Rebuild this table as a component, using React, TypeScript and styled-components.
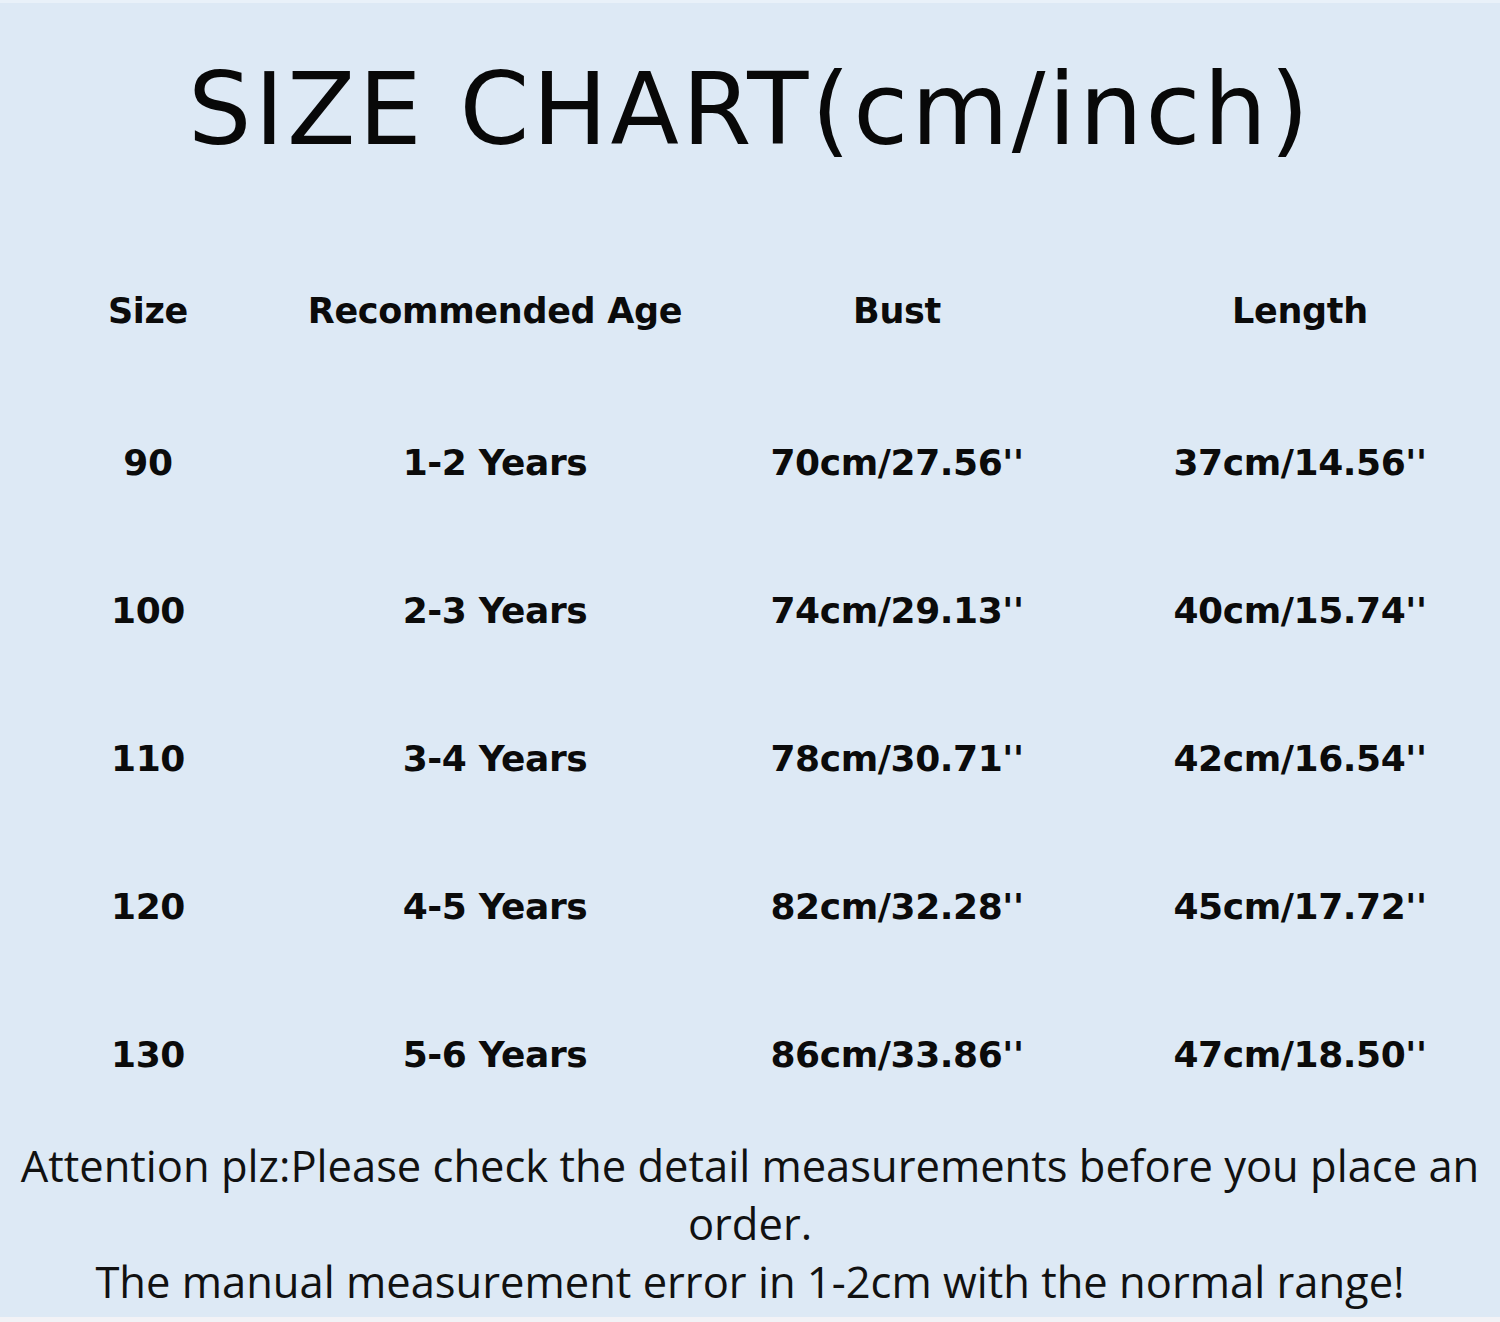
import React from "react";
import styled, { createGlobalStyle } from "styled-components";

const GlobalStyle = createGlobalStyle`
  html, body {
    margin: 0;
    padding: 0;
    background: #dde9f5;
  }
`;

const Page = styled.div`
  width: 1500px;
  height: 1322px;
  box-sizing: border-box;
  background: #dde9f5;
  border-top: 3px solid #e9f1f9;
  border-bottom: 5px solid #f2f2f6;
  display: flex;
  flex-direction: column;
  color: #0a0a0a;
  overflow: hidden;
`;

const Title = styled.h1`
  height: 234px;
  margin: 0;
  padding-top: 52px;
  box-sizing: border-box;
  text-align: center;
  font-family: "DejaVu Sans", sans-serif;
  font-weight: 400;
  font-size: 100px;
  line-height: 110px;
  letter-spacing: 3px;
  color: #080808;
`;

const Table = styled.div`
  display: grid;
  grid-template-columns: 296px 398px 406px 400px;
  grid-template-rows: 151px repeat(5, 148px);
`;

const Cell = styled.div<{ $head?: boolean }>`
  display: flex;
  align-items: center;
  justify-content: center;
  padding-bottom: ${(p) => (p.$head ? "3px" : "0")};
  font-family: "DejaVu Sans", sans-serif;
  font-weight: 700;
  font-size: ${(p) => (p.$head ? "35px" : "36px")};
  letter-spacing: ${(p) => (p.$head ? "-0.3px" : "-0.4px")};
  color: #0b0b0b;
  white-space: nowrap;
`;

const Notes = styled.div`
  padding-top: 9px;
  text-align: center;
  font-family: "Open Sans", sans-serif;
  font-size: 43.5px;
  line-height: 58px;
  color: #111;
`;

const headers = ["Size", "Recommended Age", "Bust", "Length"];

const rows = [
  ["90", "1-2 Years", "70cm/27.56''", "37cm/14.56''"],
  ["100", "2-3 Years", "74cm/29.13''", "40cm/15.74''"],
  ["110", "3-4 Years", "78cm/30.71''", "42cm/16.54''"],
  ["120", "4-5 Years", "82cm/32.28''", "45cm/17.72''"],
  ["130", "5-6 Years", "86cm/33.86''", "47cm/18.50''"],
];

export default function App() {
  return (
    <>
      <GlobalStyle />
      <Page>
        <Title>SIZE CHART(cm/inch)</Title>
        <Table>
          {headers.map((h) => (
            <Cell key={h} $head>
              {h}
            </Cell>
          ))}
          {rows.map((r) =>
            r.map((v, i) => <Cell key={r[0] + i}>{v}</Cell>)
          )}
        </Table>
        <Notes>
          Attention plz:Please check the detail measurements before you place an
          order.
          <br />
          The manual measurement error in 1-2cm with the normal range!
        </Notes>
      </Page>
    </>
  );
}
